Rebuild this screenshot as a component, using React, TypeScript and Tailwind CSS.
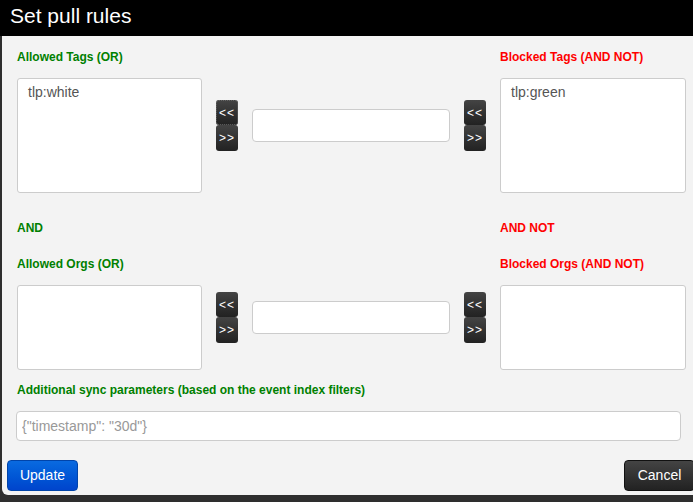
import { ChangeEvent, useState } from 'react';

const font = { fontFamily: '"Liberation Sans", Arial, sans-serif' };

function ShiftButtons({ focused = false }: { focused?: boolean }) {
  const btn =
    'flex w-[22px] items-center justify-center rounded-[3px] bg-gradient-to-b from-[#444444] to-[#222222] text-[12px] leading-none tracking-[1px] text-white';
  return (
    <div className="flex flex-col">
      <button className={`${btn} h-[25px] ${focused ? 'outline-1 outline-dotted outline-[#666] -outline-offset-1' : ''}`}>
        &lt;&lt;
      </button>
      <button className={`${btn} h-[26px]`}>&gt;&gt;</button>
    </div>
  );
}

interface RuleRowProps {
  leftItems: string[];
  rightItems: string[];
  boxHeight: number;
  buttonsTop: string;
  inputTop: string;
  focused?: boolean;
}

function RuleRow({ leftItems, rightItems, boxHeight, buttonsTop, inputTop, focused }: RuleRowProps) {
  const [value, setValue] = useState('');
  const box =
    'rounded-[3px] border border-[#cccccc] bg-white px-[10px] pt-[3px] text-[14px] leading-[20px] text-[#555555]';
  return (
    <div className="flex items-start">
      <div className={`${box} w-[185px]`} style={{ height: boxHeight }}>
        {leftItems.map((t) => (
          <div key={t}>{t}</div>
        ))}
      </div>
      <div className={`ml-[14px] ${buttonsTop}`}>
        <ShiftButtons focused={focused} />
      </div>
      <input
        value={value}
        onChange={(e: ChangeEvent<HTMLInputElement>) => setValue(e.target.value)}
        className={`ml-[14px] ${inputTop} h-[33px] w-[198px] rounded-[4px] border border-[#cccccc] bg-white px-2 text-[14px] outline-none`}
      />
      <div className={`ml-[14px] ${buttonsTop}`}>
        <ShiftButtons />
      </div>
      <div className={`${box} ml-[14px] w-[186px]`} style={{ height: boxHeight }}>
        {rightItems.map((t) => (
          <div key={t}>{t}</div>
        ))}
      </div>
    </div>
  );
}

function Labels({ left, right }: { left: string; right: string }) {
  return (
    <div className="flex text-[12px] font-bold leading-[14px]">
      <div className="w-[483px] text-[#008000]">{left}</div>
      <div className="text-[#ff0000]">{right}</div>
    </div>
  );
}

export default function App() {
  return (
    <div className="h-[502px] w-[693px] overflow-hidden bg-[#2e2e2e]" style={font}>
      <div className="flex h-[36px] items-center bg-black pl-[10px] pb-[6px]">
        <h3 className="text-[21px] leading-none text-white">Set pull rules</h3>
      </div>
      <div className="ml-[2px] h-[459px] rounded-bl-[6px] bg-[#f3f3f3] pl-[15px]">
        <div className="pt-[14px]">
          <Labels left="Allowed Tags (OR)" right="Blocked Tags (AND NOT)" />
        </div>
        <div className="mt-[14px]">
          <RuleRow
            leftItems={['tlp:white']}
            rightItems={['tlp:green']}
            boxHeight={115}
            buttonsTop="mt-[22px]"
            inputTop="mt-[31px]"
            focused
          />
        </div>
        <div className="mt-[28px]">
          <Labels left="AND" right="AND NOT" />
        </div>
        <div className="mt-[22px]">
          <Labels left="Allowed Orgs (OR)" right="Blocked Orgs (AND NOT)" />
        </div>
        <div className="mt-[14px]">
          <RuleRow
            leftItems={[]}
            rightItems={[]}
            boxHeight={85}
            buttonsTop="mt-[7px]"
            inputTop="mt-[16px]"
          />
        </div>
        <div className="mt-[13px] text-[12px] font-bold leading-[14px] text-[#008000]">
          Additional sync parameters (based on the event index filters)
        </div>
        <input
          placeholder='{"timestamp": "30d"}'
          className="mt-[14px] -ml-[1px] h-[30px] w-[665px] rounded-[4px] border border-[#cccccc] bg-white px-[5px] text-[14px] text-[#555] placeholder:text-[#999999] outline-none"
        />
        <div className="-ml-[10px] mt-[19px] flex justify-between">
          <button className="h-[31px] w-[71px] rounded-[4px] border border-[#0044aa] bg-gradient-to-b from-[#0a6ae0] to-[#0044cc] text-[14px] text-white">
            Update
          </button>
          <button className="-mr-[2px] h-[31px] w-[71px] rounded-[4px] border border-[#111] bg-gradient-to-b from-[#444444] to-[#222222] text-[14px] text-white">
            Cancel
          </button>
        </div>
      </div>
    </div>
  );
}
